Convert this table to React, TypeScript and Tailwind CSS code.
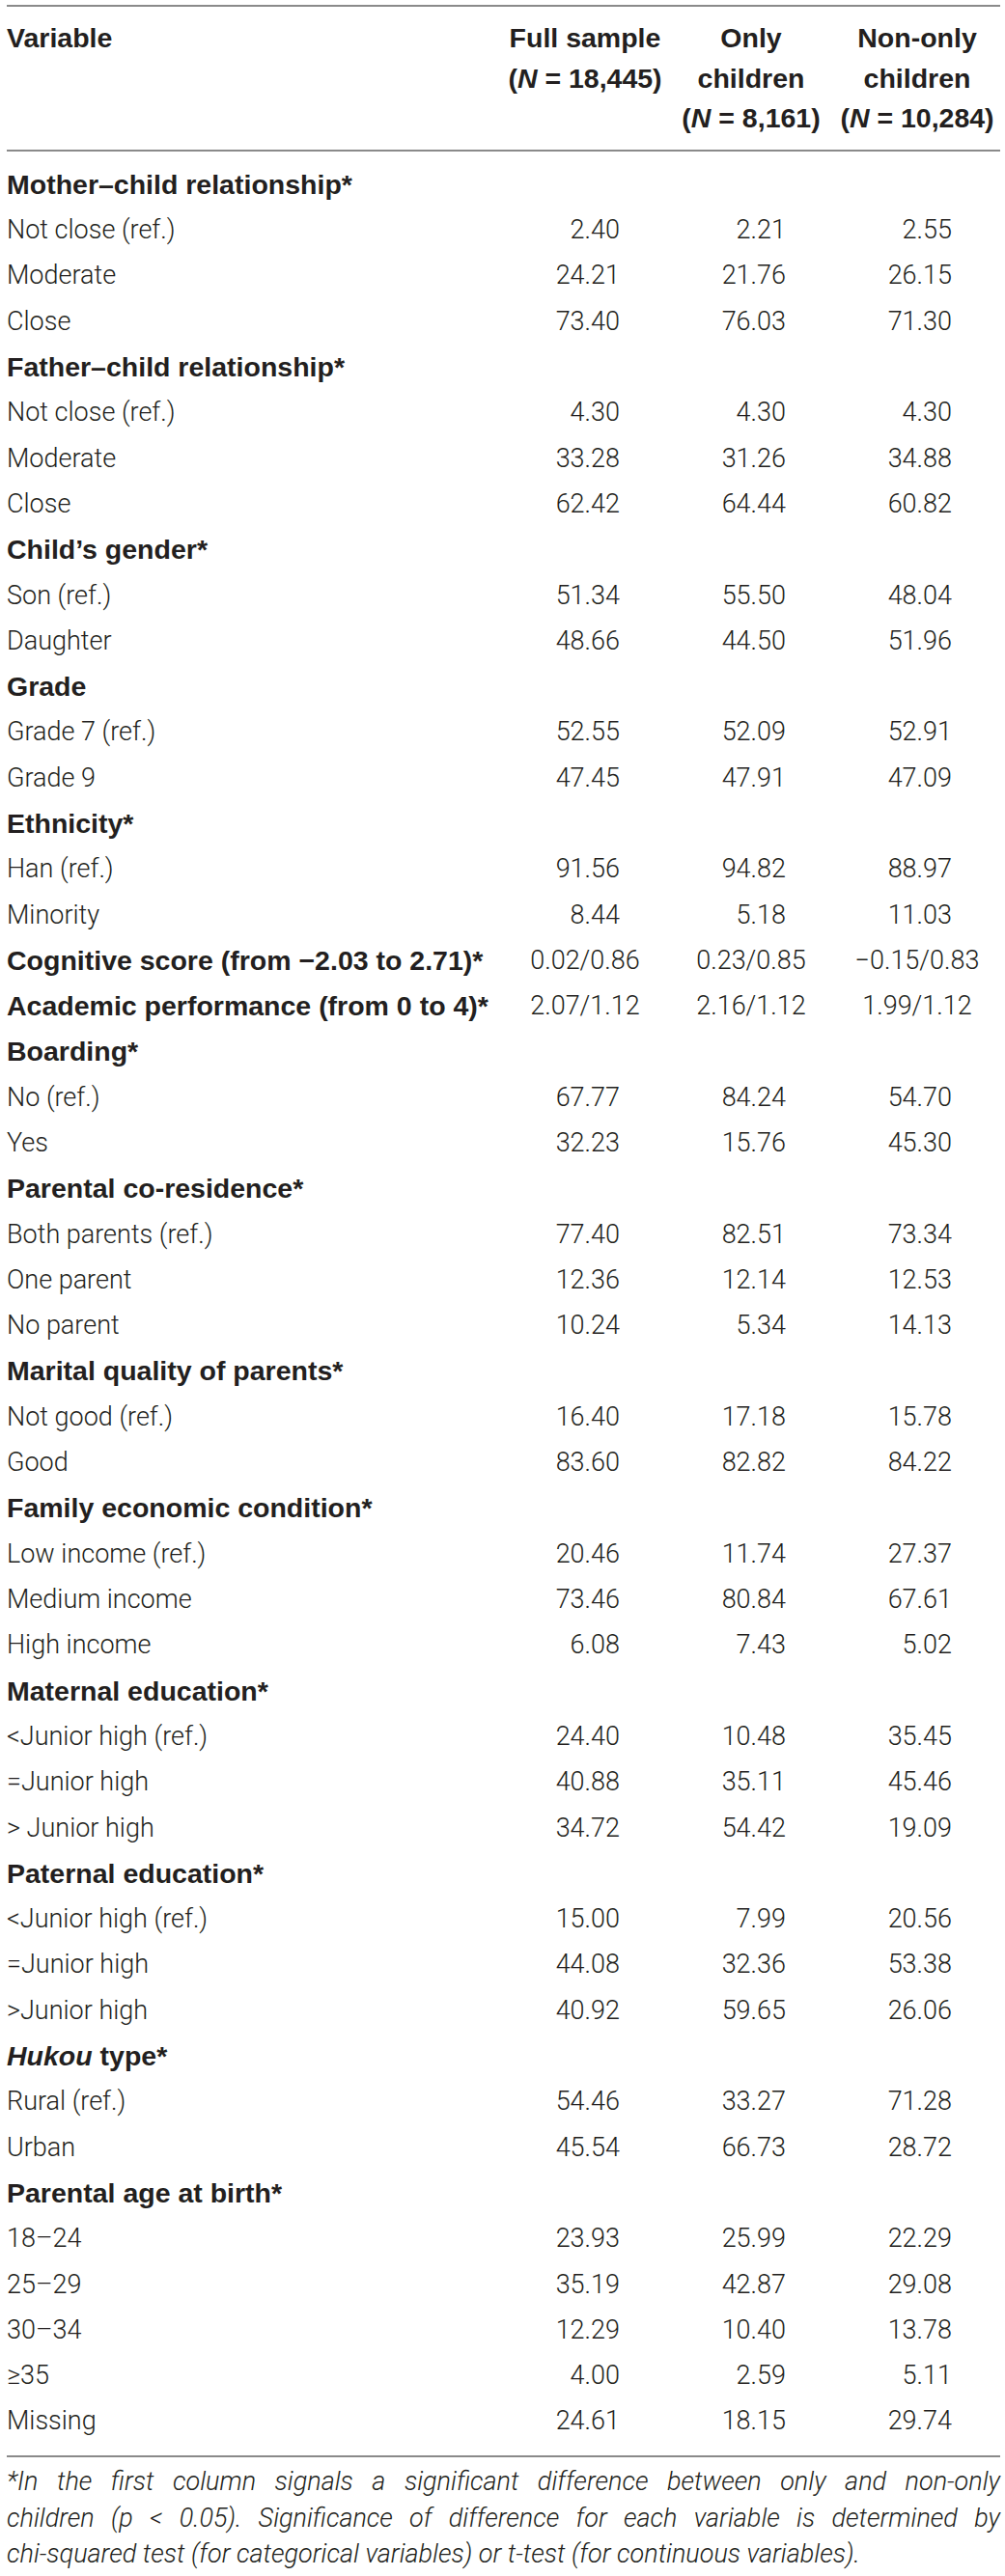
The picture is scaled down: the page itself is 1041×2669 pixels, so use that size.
import type { ReactNode } from "react";

type Section = {
  title: ReactNode;
  rows?: string[][];
  values?: string[];
};

const SECTIONS: Section[] = [
  {
    title: "Mother–child relationship*",
    rows: [
      ["Not close (ref.)", "2.40", "2.21", "2.55"],
      ["Moderate", "24.21", "21.76", "26.15"],
      ["Close", "73.40", "76.03", "71.30"],
    ],
  },
  {
    title: "Father–child relationship*",
    rows: [
      ["Not close (ref.)", "4.30", "4.30", "4.30"],
      ["Moderate", "33.28", "31.26", "34.88"],
      ["Close", "62.42", "64.44", "60.82"],
    ],
  },
  {
    title: "Child’s gender*",
    rows: [
      ["Son (ref.)", "51.34", "55.50", "48.04"],
      ["Daughter", "48.66", "44.50", "51.96"],
    ],
  },
  {
    title: "Grade",
    rows: [
      ["Grade 7 (ref.)", "52.55", "52.09", "52.91"],
      ["Grade 9", "47.45", "47.91", "47.09"],
    ],
  },
  {
    title: "Ethnicity*",
    rows: [
      ["Han (ref.)", "91.56", "94.82", "88.97"],
      ["Minority", "8.44", "5.18", "11.03"],
    ],
  },
  {
    title: "Cognitive score (from −2.03 to 2.71)*",
    values: ["0.02/0.86", "0.23/0.85", "−0.15/0.83"],
  },
  {
    title: "Academic performance (from 0 to 4)*",
    values: ["2.07/1.12", "2.16/1.12", "1.99/1.12"],
  },
  {
    title: "Boarding*",
    rows: [
      ["No (ref.)", "67.77", "84.24", "54.70"],
      ["Yes", "32.23", "15.76", "45.30"],
    ],
  },
  {
    title: "Parental co-residence*",
    rows: [
      ["Both parents (ref.)", "77.40", "82.51", "73.34"],
      ["One parent", "12.36", "12.14", "12.53"],
      ["No parent", "10.24", "5.34", "14.13"],
    ],
  },
  {
    title: "Marital quality of parents*",
    rows: [
      ["Not good (ref.)", "16.40", "17.18", "15.78"],
      ["Good", "83.60", "82.82", "84.22"],
    ],
  },
  {
    title: "Family economic condition*",
    rows: [
      ["Low income (ref.)", "20.46", "11.74", "27.37"],
      ["Medium income", "73.46", "80.84", "67.61"],
      ["High income", "6.08", "7.43", "5.02"],
    ],
  },
  {
    title: "Maternal education*",
    rows: [
      ["<Junior high (ref.)", "24.40", "10.48", "35.45"],
      ["=Junior high", "40.88", "35.11", "45.46"],
      ["> Junior high", "34.72", "54.42", "19.09"],
    ],
  },
  {
    title: "Paternal education*",
    rows: [
      ["<Junior high (ref.)", "15.00", "7.99", "20.56"],
      ["=Junior high", "44.08", "32.36", "53.38"],
      [">Junior high", "40.92", "59.65", "26.06"],
    ],
  },
  {
    title: (
      <>
        <i>Hukou</i> type*
      </>
    ),
    rows: [
      ["Rural (ref.)", "54.46", "33.27", "71.28"],
      ["Urban", "45.54", "66.73", "28.72"],
    ],
  },
  {
    title: "Parental age at birth*",
    rows: [
      ["18–24", "23.93", "25.99", "22.29"],
      ["25–29", "35.19", "42.87", "29.08"],
      ["30–34", "12.29", "10.40", "13.78"],
      ["≥35", "4.00", "2.59", "5.11"],
      ["Missing", "24.61", "18.15", "29.74"],
    ],
  },
];

const grid = "grid grid-cols-[1fr_172px_172px_172px]";
const bold = "font-['Liberation_Sans',Arial,sans-serif] font-bold text-[28.5px]";

function Rule() {
  return <div className="h-[2px] bg-[#8a8a8a]" />;
}

function Num({ value }: { value: string }) {
  return (
    <div className="flex justify-center">
      <div className="w-[72px] text-right whitespace-nowrap">{value}</div>
    </div>
  );
}

export default function App() {
  return (
    <div className="w-[1041px] bg-white pl-[7px] pr-[5px] pt-[5px] font-['Roboto',sans-serif] font-light text-[27px] text-[#231f20]">
      <Rule />

      {/* column headers */}
      <div className={`${grid} ${bold} pt-[12px] pb-[11px] leading-[41.5px]`}>
        <div>Variable</div>
        <div className="text-center whitespace-nowrap">
          Full sample
          <br />(<i>N</i> = 18,445)
        </div>
        <div className="text-center whitespace-nowrap">
          Only
          <br />
          children
          <br />(<i>N</i> = 8,161)
        </div>
        <div className="text-center whitespace-nowrap">
          Non-only
          <br />
          children
          <br />(<i>N</i> = 10,284)
        </div>
      </div>

      <Rule />

      <div className="pt-[11px] pb-[12px]">
        {SECTIONS.map((s, i) => (
          <div key={i}>
            <div className={`${grid} h-[47.3px] items-center`}>
              <div className={`${bold} whitespace-nowrap`}>{s.title}</div>
              {s.values?.map((v) => (
                <div key={v} className="text-center whitespace-nowrap">
                  {v}
                </div>
              ))}
            </div>
            {s.rows?.map((r) => (
              <div key={r[0]} className={`${grid} h-[47.3px] items-center`}>
                <div className="whitespace-nowrap">{r[0]}</div>
                <Num value={r[1]} />
                <Num value={r[2]} />
                <Num value={r[3]} />
              </div>
            ))}
          </div>
        ))}
      </div>

      <Rule />

      {/* note */}
      <div className="pt-[7px] italic leading-[37.5px]">
        <div className="text-justify [text-align-last:justify]">
          *In the first column signals a significant difference between only and non-only
        </div>
        <div className="text-justify [text-align-last:justify]">
          children (p &lt; 0.05). Significance of difference for each variable is determined by
        </div>
        <div>chi-squared test (for categorical variables) or t-test (for continuous variables).</div>
      </div>
    </div>
  );
}
